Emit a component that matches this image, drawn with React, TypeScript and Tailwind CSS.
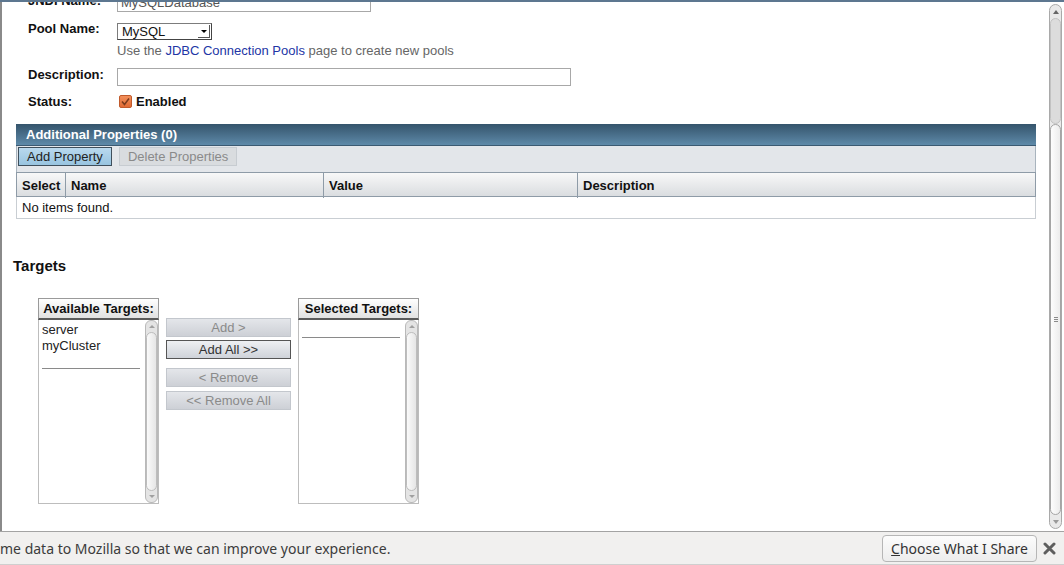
import React from "react";

function Label({ children }: { children: React.ReactNode }) {
  return (
    <div className="w-[89px] shrink-0 text-[13px] font-bold leading-[15px] text-[#111]">
      {children}
    </div>
  );
}

function PanelScroll() {
  return (
    <div className="flex h-full w-[13px] shrink-0 flex-col items-center rounded-[6px] border border-[#b9b9b9] bg-[#e4e4e4]">
      <div className="flex h-[11px] w-full items-center justify-center">
        <div className="h-0 w-0 border-x-[3px] border-b-[3px] border-x-transparent border-b-[#a0a0a0]" />
      </div>
      <div className="w-[11px] flex-1 rounded-[6px] border border-[#bdbdbd] bg-gradient-to-r from-[#fafafa] to-[#e6e6e6]" />
      <div className="flex h-[11px] w-full items-center justify-center">
        <div className="h-0 w-0 border-x-[3px] border-t-[3px] border-x-transparent border-t-[#a0a0a0]" />
      </div>
    </div>
  );
}

function TargetBox({
  title,
  items,
  lineTop,
}: {
  title: string;
  items: string[];
  lineTop: string;
}) {
  return (
    <div className="flex w-[121px] flex-col">
      <div className="h-[22px] border border-[#9a9a9a] border-b-2 border-b-[#5a5a5a] bg-gradient-to-b from-[#ffffff] to-[#e1e1e1] text-center text-[13px] font-bold leading-[19px] text-[#111]">
        {title}
      </div>
      <div className="flex h-[184px] border border-t-0 border-[#bdbdbd] bg-white">
        <div className="flex-1 pl-[3px] pt-[2px] text-[13px] leading-[16px] text-[#222]">
          {items.map((i) => (
            <div key={i}>{i}</div>
          ))}
          <div className={`${lineTop} h-px w-[98px] bg-[#8a8a8a]`} />
        </div>
        <PanelScroll />
      </div>
    </div>
  );
}

function MoveButton({
  children,
  active = false,
}: {
  children: React.ReactNode;
  active?: boolean;
}) {
  return (
    <div
      className={
        active
          ? "h-[19px] w-[125px] border border-[#555] bg-gradient-to-b from-[#eef0f3] to-[#cfd3d9] text-center text-[13px] leading-[17px] text-[#333]"
          : "h-[19px] w-[125px] border border-[#c3c7cd] bg-gradient-to-b from-[#e4e6ea] to-[#cdd0d6] text-center text-[13px] leading-[17px] text-[#8a8a8a]"
      }
    >
      {children}
    </div>
  );
}

export default function App() {
  return (
    <div className="flex h-[565px] w-[1064px] flex-col overflow-hidden bg-white font-['Liberation_Sans',Arial,sans-serif]">
      <div className="h-[2px] bg-[#5d7790]" />

      <div className="flex h-[529px]">
        <div className="flex-1 overflow-hidden border-l-2 border-[#8a8a8a]">
          {/* form */}
          <div className="-mt-[9px] pl-[26px]">
            <div className="flex h-[19px]">
              <Label>JNDI Name:</Label>
              <div className="h-[19px] w-[254px] border border-[#a8a8a8] px-[3px] text-[13px] leading-[17px] text-[#555]">
                MySQLDatabase
              </div>
            </div>

            <div className="mt-[9px] flex h-[19px]">
              <Label>Pool Name:</Label>
              <div className="mt-[2px] flex h-[17px] w-[95px] border border-[#7c7c7c] border-r-[#444] border-b-[#444] bg-white">
                <div className="flex-1 pl-[4px] text-[13px] leading-[15px] text-[#111]">MySQL</div>
                <div className="m-[1px] flex w-[12px] items-center justify-center border-r border-b border-[#555] bg-white">
                  <div className="h-0 w-0 border-x-[3px] border-t-[3px] border-x-transparent border-t-[#000]" />
                </div>
              </div>
            </div>

            <div className="mt-[3px] pl-[89px] text-[13px] leading-[15px] text-[#666]">
              Use the <span className="text-[#2235a5]">JDBC Connection Pools</span> page to create new pools
            </div>

            <div className="mt-[9px] flex h-[19px]">
              <Label>Description:</Label>
              <div className="mt-[1px] h-[18px] w-[454px] border border-[#a8a8a8] bg-white" />
            </div>

            <div className="mt-[8px] flex h-[15px]">
              <Label>Status:</Label>
              <div className="flex items-center gap-[4px] pl-[2px]">
                <svg width="13" height="13" viewBox="0 0 13 13">
                  <defs>
                    <linearGradient id="cb" x1="0" y1="0" x2="0" y2="1">
                      <stop offset="0" stopColor="#f3915c" />
                      <stop offset="1" stopColor="#e06832" />
                    </linearGradient>
                  </defs>
                  <rect x="0.5" y="0.5" width="12" height="12" rx="1.5" fill="url(#cb)" stroke="#c05a2c" />
                  <path d="M3 6.5 L5.5 9.5 L10 3.5" fill="none" stroke="#7a3a1c" strokeWidth="1.5" />
                </svg>
                <span className="text-[13px] font-bold leading-[15px] text-[#111]">Enabled</span>
              </div>
            </div>
          </div>

          {/* additional properties */}
          <div className="ml-[14px] mt-[15px] w-[1020px]">
            <div className="h-[22px] border-b border-[#3b5a72] bg-gradient-to-b from-[#35546c] to-[#5e8aa9] pl-[10px] text-[13px] font-bold leading-[22px] text-white">
              Additional Properties (0)
            </div>
            <div className="flex h-[26px] items-start gap-[7px] border-x border-[#a9b4be] bg-[#e3e6ea] pl-[1px] pt-[1px]">
              <div className="h-[19px] border border-[#3f4f5c] bg-gradient-to-b from-[#b9d9ee] to-[#98c4e0] px-[8px] text-[13px] leading-[17px] text-[#222]">
                Add Property
              </div>
              <div className="h-[19px] border border-[#c7ccd1] bg-[#d9dcdf] px-[8px] text-[13px] leading-[17px] text-[#8a8a8a]">
                Delete Properties
              </div>
            </div>
            <div className="grid h-[25px] grid-cols-[48px_258px_254px_1fr] border border-[#8e9ba7] bg-gradient-to-b from-[#f8f8f8] to-[#dadde0] text-[13px] font-bold leading-[25px] text-[#111]">
              <div className="pl-[5px]">Select</div>
              <div className="border-l border-[#8e9ba7] pl-[5px]">Name</div>
              <div className="border-l border-[#8e9ba7] pl-[5px]">Value</div>
              <div className="border-l border-[#8e9ba7] pl-[5px]">Description</div>
            </div>
            <div className="h-[22px] border border-t-0 border-[#c9ced3] pl-[5px] text-[13px] leading-[22px] text-[#111]">
              No items found.
            </div>
          </div>

          {/* targets */}
          <div className="ml-[11px] mt-[38px] text-[15px] font-bold leading-[18px] text-[#111]">Targets</div>

          <div className="ml-[36px] mt-[23px] flex">
            <TargetBox title="Available Targets:" items={["server", "myCluster"]} lineTop="mt-[14px]" />
            <div className="ml-[7px] mt-[20px] flex flex-col">
              <MoveButton>Add &gt;</MoveButton>
              <div className="mt-[3px]">
                <MoveButton active>Add All &gt;&gt;</MoveButton>
              </div>
              <div className="mt-[9px]">
                <MoveButton>&lt; Remove</MoveButton>
              </div>
              <div className="mt-[4px]">
                <MoveButton>&lt;&lt; Remove All</MoveButton>
              </div>
            </div>
            <div className="ml-[7px]">
              <TargetBox title="Selected Targets:" items={[]} lineTop="mt-[15px]" />
            </div>
          </div>
        </div>

        {/* page scrollbar */}
        <div className="flex w-[16px] flex-col bg-white py-[2px] pr-[2px] pl-[1px]">
          <div className="flex flex-1 flex-col items-center rounded-[7px] border border-[#a9a9a9] bg-[#e9e9e9]">
            <div className="flex h-[13px] w-full items-center justify-center">
              <div className="h-0 w-0 border-x-[3px] border-b-[4px] border-x-transparent border-b-[#666]" />
            </div>
            <div className="h-[106px] w-[11px] rounded-[6px] border border-[#c2c2c2] bg-[#dcdcdc]" />
            <div className="flex w-[11px] flex-1 items-center justify-center rounded-[6px] border border-[#a5a5a5] bg-gradient-to-r from-[#fdfdfd] to-[#ececec]">
              <div className="flex flex-col gap-[1px]">
                <div className="h-px w-[4px] bg-[#8a8a8a]" />
                <div className="h-px w-[4px] bg-[#8a8a8a]" />
                <div className="h-px w-[4px] bg-[#8a8a8a]" />
              </div>
            </div>
            <div className="flex h-[13px] w-full items-center justify-center">
              <div className="h-0 w-0 border-x-[3px] border-t-[4px] border-x-transparent border-t-[#9a9a9a]" />
            </div>
          </div>
        </div>
      </div>

      {/* notification bar */}
      <div className="flex h-[34px] items-center border-y border-t-[#a3a3a3] border-b-[#cfcfcf] bg-[#f1f0ef] font-['Noto_Sans','Open_Sans',sans-serif]">
        <div className="flex-1 whitespace-nowrap text-[14px] text-[#3c3c3c]">
          me data to Mozilla so that we can improve your experience.
        </div>
        <div className="flex h-[27px] items-center rounded-[4px] border border-[#b6b6b6] bg-gradient-to-b from-[#fcfcfc] to-[#ededed] px-[8px] text-[14px] text-[#333]">
          <span className="underline">C</span>hoose What I Share
        </div>
        <div className="ml-[5px] mr-[8px] flex w-[14px] items-center justify-center">
          <svg width="13" height="13" viewBox="0 0 13 13">
            <path d="M2 2 L11 11 M11 2 L2 11" stroke="#5e5e5e" strokeWidth="3" strokeLinecap="round" />
          </svg>
        </div>
      </div>
    </div>
  );
}
